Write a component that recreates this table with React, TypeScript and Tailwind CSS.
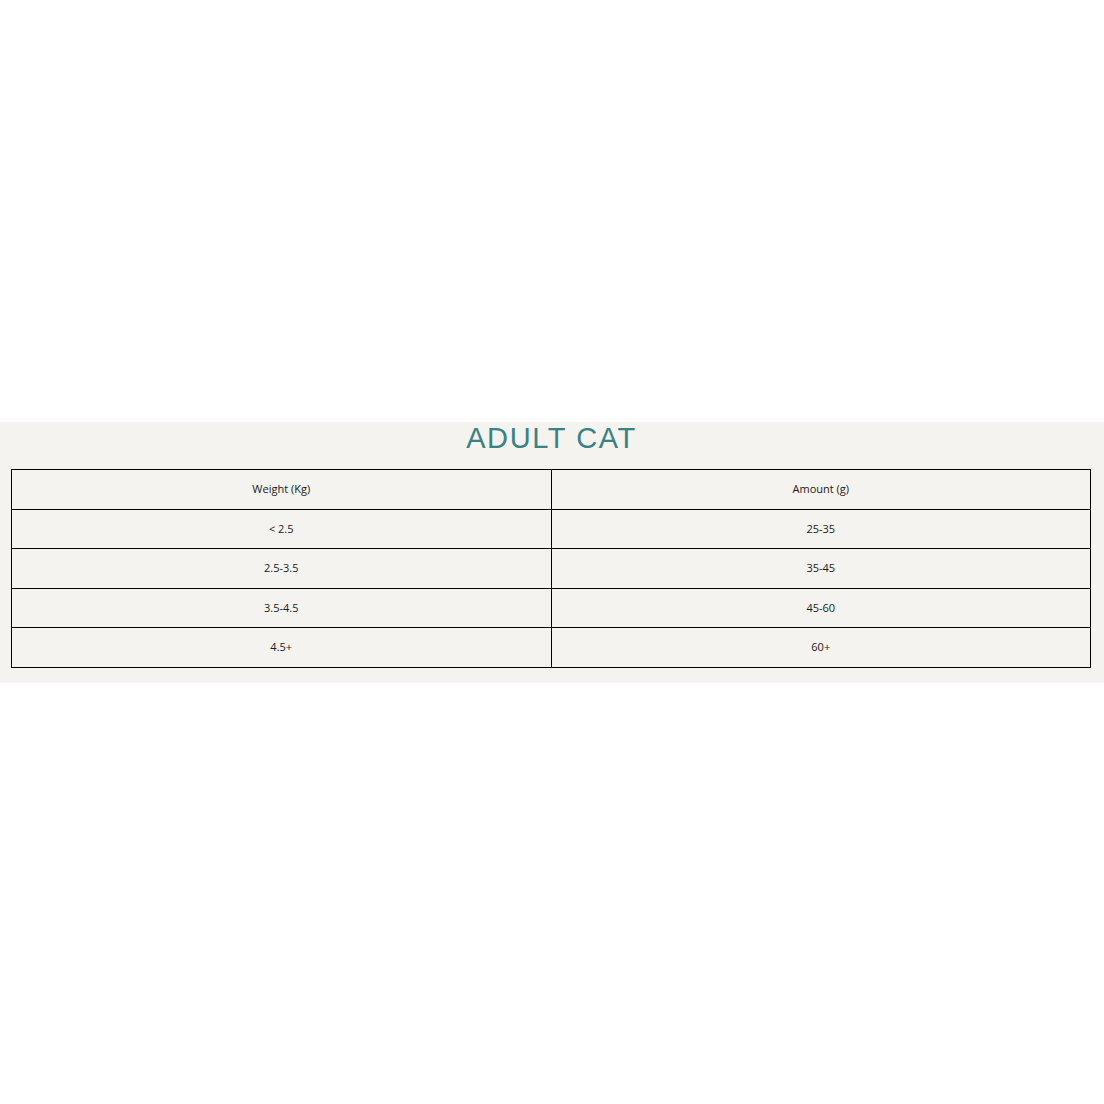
const rows = [
  ['< 2.5', '25-35'],
  ['2.5-3.5', '35-45'],
  ['3.5-4.5', '45-60'],
  ['4.5+', '60+'],
];

export default function App() {
  return (
    <div className="w-[1104px] h-[1104px] bg-white flex flex-col">
      <div className="h-[422px]" />
      <section className="bg-[#f4f3ef] pl-[11px] pr-[13px] pb-[15px]">
        <h2
          className="text-center text-[#3b8282] text-[29px] leading-[32px] h-[47px] tracking-[1.6px] pl-[1px]"
          style={{ fontFamily: '"Liberation Sans", Arial, sans-serif' }}
        >
          ADULT CAT
        </h2>
        <table
          className="w-full border-collapse text-[11px] text-[#1a1a1a]"
          style={{ fontFamily: '"Open Sans", "Liberation Sans", sans-serif' }}
        >
          <tbody>
            <tr className="h-[39.5px]">
              <td className="border border-black text-center w-1/2">Weight (Kg)</td>
              <td className="border border-black text-center">Amount (g)</td>
            </tr>
            {rows.map(([w, a]) => (
              <tr key={w} className="h-[39.5px]">
                <td className="border border-black text-center">{w}</td>
                <td className="border border-black text-center">{a}</td>
              </tr>
            ))}
          </tbody>
        </table>
      </section>
    </div>
  );
}
